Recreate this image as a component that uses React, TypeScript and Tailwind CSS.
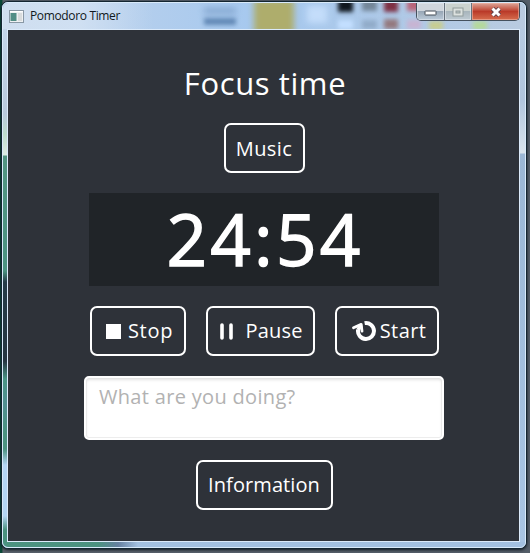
import React from "react";

const button =
  "flex h-[50px] items-center justify-center whitespace-nowrap rounded-[7px] border-2 border-white text-[20px] leading-none text-white";

function TitleBar() {
  return (
    <header className="relative flex h-[26px] shrink-0 items-start overflow-hidden rounded-t-[6px] bg-linear-to-r from-[#c3d5ea] via-[#a5c8ef] to-[#b9cbe0]">
      <div className="absolute inset-0 overflow-hidden">
        <div className="absolute top-0 left-0 h-full w-[150px] bg-linear-to-r from-[#d8e5f3]/60 via-[#d9e6f5]/70 to-transparent" />
        <div className="absolute top-[5px] left-[201px] h-[6px] w-[32px] bg-[#84a7d0] blur-[3px]" />
        <div className="absolute top-[15px] left-[201px] h-[7px] w-[32px] bg-[#6289b6] blur-[2px]" />
        <div className="absolute -top-1 left-[251px] h-[35px] w-[40px] bg-[#aead6c] blur-[3px]" />
        <div className="absolute top-[3px] left-[304px] h-[17px] w-[20px] bg-[#c4ddfa] blur-[3px]" />
        <div className="absolute -top-1 left-[335px] h-[13px] w-[15px] bg-[#10171f] blur-[2px]" />
        <div className="absolute top-[17px] left-[335px] h-[9px] w-[15px] bg-[#c3dfff] blur-[2px]" />
        <div className="absolute -top-1 left-[359px] h-[12px] w-[15px] bg-[#748799] blur-[2px]" />
        <div className="absolute top-[17px] left-[359px] h-[9px] w-[15px] bg-[#91acc9] blur-[2px]" />
        <div className="absolute -top-1 left-[381px] h-[13px] w-[14px] bg-[#7e3044] blur-[2px]" />
        <div className="absolute top-[16px] left-[381px] h-[10px] w-[14px] bg-[#94797f] blur-[2px]" />
        <div className="absolute -top-1 left-[404px] h-[12px] w-[14px] bg-[#b8657a] blur-[2px]" />
        <div className="absolute top-[17px] left-[404px] h-[9px] w-[14px] bg-[#c8b3d2] blur-[2px]" />
        <div className="absolute top-[18px] left-[426px] h-[9px] w-[14px] bg-[#c8cd90] blur-[2px]" />
        <div className="absolute top-[18px] left-[470px] h-[9px] w-[14px] bg-[#b4d99a] blur-[2px]" />
      </div>
      <svg className="relative mt-[7px] ml-[6px] h-[13px] w-[15px] shrink-0" viewBox="0 0 15 13">
        <rect x="0.5" y="0.5" width="14" height="12" fill="#eef1f3" stroke="#8998a5" />
        <rect x="1.5" y="3" width="6" height="8" fill="#528e86" />
        <rect x="9" y="3" width="4" height="8" fill="#d9dcdd" />
        <path d="M1 1.5H14" stroke="#fff" />
      </svg>
      <span className="relative mt-[5px] ml-[6px] whitespace-nowrap text-[12px] leading-[15px] tracking-[-0.35px] text-[#101820]">
        Pomodoro Timer
      </span>
      <div className="relative mr-[5px] ml-auto flex h-[18px] w-[104px] shrink-0 overflow-hidden rounded-b-[5px] border border-t-0 border-[#45515e]">
        <div className="flex w-[28px] items-center justify-center border-r border-[#67727d] bg-linear-to-b from-[#d0d6dd] from-45% via-[#98a7b6] via-50% to-[#bccbd9] shadow-[inset_0_0_0_1px_#e2e8ee99]">
          <svg className="mt-[3px] h-[6px] w-[13px]" viewBox="0 0 13 6">
            <rect x="1" y="1" width="11" height="4" rx="0.5" fill="#fff" stroke="#444c56" />
          </svg>
        </div>
        <div className="flex w-[27px] items-center justify-center border-r border-[#67727d] bg-linear-to-b from-[#cbd2cf] from-45% via-[#a8b5bc] via-50% to-[#bfcbd3] shadow-[inset_0_0_0_1px_#e2e8ee99]">
          <svg className="h-[10px] w-[12px]" viewBox="0 0 12 10">
            <rect x="1" y="1" width="10" height="8" fill="#dce1df" stroke="#919c9c" />
            <rect x="4" y="4" width="4" height="2" fill="#b9c3c3" stroke="#919c9c" />
          </svg>
        </div>
        <div className="flex flex-1 items-center justify-center bg-linear-to-b from-[#d99b8e] from-5% via-[#ba3a29] via-50% to-[#d66d4e] shadow-[inset_0_0_0_1px_#f0b7a799]">
          <svg className="h-[10px] w-[12px]" viewBox="0 0 12 10">
            <path d="M2.5 1.5L9.5 8.5M9.5 1.5L2.5 8.5" stroke="#60424a" strokeWidth="4.6" />
            <path d="M2.5 1.5L9.5 8.5M9.5 1.5L2.5 8.5" stroke="#fff" strokeWidth="3" />
          </svg>
        </div>
      </div>
    </header>
  );
}

export default function App() {
  return (
    <div className="flex h-[553px] w-[530px] flex-col overflow-hidden bg-linear-to-r from-[#0a4938] from-[2px] via-[#5a626b] via-[3px] to-[#545e69] pt-[1px] pl-[1px] font-['Open_Sans',sans-serif]">
      <div className="flex h-[548px] w-[526px] flex-col rounded-[7px] border border-[#142631] bg-[#a5c3e1] shadow-[0_1px_3px_#101820]">
        <div className="flex min-h-0 flex-1 flex-col overflow-hidden rounded-[6px] border border-[#d9eafa]">
          <TitleBar />
          <div className="flex min-h-0 flex-1">
            <div className="w-[4px] shrink-0 bg-[linear-gradient(to_bottom,#c3d5e9_0px,#b8cadd_85px,#bddccd_105px,#dcebe3_126px,#519481_127px,#4b9381_242px,#253c48_253px,#253541_332px,#4a9585_350px,#518f91_375px,#4a9380_405px,#4b9280_420px,#b4d5f4_436px,#b4d5f4_487px,#4a917e_501px,#4a917e_520px)]" />
            <main className="flex min-w-0 flex-1 flex-col items-center border border-[#dbeafa] bg-[#2e3239] pt-[36px] pl-px">
              <h1 className="h-[57px] whitespace-nowrap pl-[2px] text-[31px] leading-[34px] tracking-[0.6px] text-white">Focus time</h1>
              <button className={`${button} w-[81px] pt-px tracking-[0.4px]`}>Music</button>
              <div className="mt-5 flex h-[93px] w-[350px] items-center justify-center bg-[#202428] pb-[2px] pl-[2px] text-[71px] leading-none tracking-[3.2px] text-white [-webkit-text-stroke:1.4px_white]">
                24:54
              </div>
              <div className="mt-5 flex w-[349px] justify-between">
                <button className={`${button} w-[96px] gap-[7px] pl-[4px] tracking-[0.7px]`}>
                  <span className="size-[15px] bg-white" />
                  Stop
                </button>
                <button className={`${button} w-[109px] gap-[12px] pl-[3px] tracking-[0.2px]`}>
                  <svg className="h-[17px] w-[13px]" viewBox="0 0 13 17" stroke="#fff" strokeWidth="3.6" strokeLinecap="round">
                    <path d="M2 2V15M11 2V15" />
                  </svg>
                  Pause
                </button>
                <button className={`${button} w-[104px] gap-[4px] pl-[5px] tracking-[0.4px]`}>
                  <svg className="h-[22px] w-[24px] shrink-0" viewBox="0 0 24 22" fill="none" stroke="#fff">
                    <path d="M12.6 3.1A8 8 0 1 1 6.1 9.6" strokeWidth="4" />
                    <path d="M1.5 7.8L9.2 4.4L10 11.2" strokeWidth="2.8" strokeLinejoin="round" strokeLinecap="round" />
                    <path d="M9 5L6 10" strokeWidth="3.6" />
                  </svg>
                  Start
                </button>
              </div>
              <textarea
                className="mt-5 block h-[64px] w-[360px] shrink-0 resize-none rounded-[5px] border-2 border-white bg-white px-[13px] py-[5px] text-[20px] leading-[28px] tracking-[0.32px] shadow-[inset_0_2px_3px_#e2e2e2,inset_0_0_0_1px_#eeeeee] outline-none placeholder:text-[#b2b2b2]"
                placeholder="What are you doing?"
              />
              <button className={`${button} mt-5 w-[137px] tracking-[0.1px]`}>Information</button>
            </main>
            <div className="w-[5px] shrink-0 bg-[linear-gradient(to_bottom,#b6cbe2_0px,#b0c5dd_70px,#d9e4ed_124px,#9bb7d5_125px,#a8c5e4_100%)]" />
          </div>
          <div className="h-[5px] shrink-0 bg-[linear-gradient(to_right,#4b9280_0px,#4b9280_95px,#6580a0_115px,#a3c1e1_135px,#a3c1e1_100%)]" />
        </div>
      </div>
    </div>
  );
}
